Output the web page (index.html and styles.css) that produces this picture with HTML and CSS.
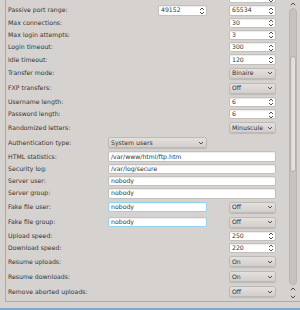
FILE: index.html
```html
<!DOCTYPE html>
<html>
<head>
<meta charset="utf-8">
<link rel="stylesheet" href="styles.css">
</head>
<body>
<div class="window">
  <div class="panel">
    <div class="viewport">
      <div class="form">
        <span class="label"></span><span class="spin c3"></span>

        <span class="label">Passive port range:</span>
        <span class="spin c2r">49152</span>
        <span class="spin c3">65534</span>

        <span class="label">Max connections:</span><span class="spin c3">30</span>
        <span class="label">Max login attempts:</span><span class="spin c3">3</span>
        <span class="label">Login timeout:</span><span class="spin c3">300</span>
        <span class="label">Idle timeout:</span><span class="spin c3">120</span>
        <span class="label">Transfer mode:</span><span class="combo c3">Binaire</span>
        <span class="label">FXP transfers:</span><span class="combo c3">Off</span>
        <span class="label">Username length:</span><span class="spin c3">6</span>
        <span class="label">Password length:</span><span class="spin c3">6</span>
        <span class="label">Randomized letters:</span><span class="combo c3">Minuscule</span>
        <span class="label">Authentication type:</span><span class="combo c2">System users</span>
        <span class="label">HTML statistics:</span><span class="text wide">/var/www/html/ftp.htm</span>
        <span class="label">Security log:</span><span class="text wide">/var/log/secure</span>
        <span class="label">Server user:</span><span class="text wide">nobody</span>
        <span class="label">Server group:</span><span class="text wide">nobody</span>
        <span class="label">Fake file user:</span><span class="text c2 focus">nobody</span><span class="combo c3">Off</span>
        <span class="label">Fake file group:</span><span class="text c2 focus">nobody</span><span class="combo c3">Off</span>
        <span class="label">Upload speed:</span><span class="spin c3">250</span>
        <span class="label">Download speed:</span><span class="spin c3">220</span>
        <span class="label">Resume uploads:</span><span class="combo c3">On</span>
        <span class="label">Resume downloads:</span><span class="combo c3">On</span>
        <span class="label">Remove aborted uploads:</span><span class="combo c3">Off</span>
      </div>
    </div>
    <div class="scrollbar">
      <div class="sb-arrow"><svg width="6" height="4" viewBox="0 0 6 4"><path d="M0.8 3.2 L3 1 L5.2 3.2" fill="none" stroke="#4a4846" stroke-width="1"/></svg></div>
      <div class="groove">
        <div class="space-top"></div>
        <div class="handle"></div>
      </div>
      <div class="sb-arrow"><svg width="6" height="4" viewBox="0 0 6 4"><path d="M0.8 3.2 L3 1 L5.2 3.2" fill="none" stroke="#4a4846" stroke-width="1"/></svg></div>
      <div class="sb-arrow"><svg width="6" height="4" viewBox="0 0 6 4"><path d="M0.8 0.8 L3 3 L5.2 0.8" fill="none" stroke="#4a4846" stroke-width="1"/></svg></div>
    </div>
  </div>
  <div class="bottom-strip"></div>
</div>
</body>
</html>
```

FILE: styles.css
```css
html, body {
  margin: 0;
  padding: 0;
  background: #d6d2cf;
}

.window {
  width: 300px;
  height: 310px;
  display: flex;
  flex-direction: column;
  background: #d6d2cf;
  font-family: "DejaVu Sans", sans-serif;
  font-size: 6.2px;
  color: #363534;
  overflow: hidden;
}

.panel {
  flex: 1;
  min-height: 0;
  display: flex;
  margin-left: 5px;
  border-left: 1px solid #aeaaa7;
  border-bottom: 1px solid #aeaaa7;
}

.viewport {
  flex: 1;
  min-width: 0;
  overflow: hidden;
}

.form {
  margin-top: -8px;
  padding-left: 2px;
  display: grid;
  grid-template-columns: 100px 99px 22px 47px;
  align-items: center;
}

.label {
  grid-column: 1;
  white-space: nowrap;
  line-height: 8px;
}

.spin, .text, .combo {
  box-sizing: border-box;
  display: flex;
  align-items: center;
  white-space: nowrap;
  overflow: hidden;
  line-height: 8px;
  padding-left: 2px;
}

.spin, .text {
  height: 10.3px;
  margin: 1px 0;
  background: #ffffff;
  border: 1px solid #c3bfbc;
  border-radius: 2px;
  box-shadow: inset 0 1px 1px rgba(0,0,0,0.08);
}

.spin {
  position: relative;
}

.spin::after {
  content: "";
  position: absolute;
  right: 2px;
  top: 1.5px;
  width: 4px;
  height: 6px;
  background:
    linear-gradient(135deg, transparent 40%, #55524f 40%, #55524f 60%, transparent 60%) 0 0 / 2px 2px no-repeat,
    linear-gradient(45deg, transparent 40%, #55524f 40%, #55524f 60%, transparent 60%) 2px 0 / 2px 2px no-repeat,
    linear-gradient(45deg, transparent 40%, #55524f 40%, #55524f 60%, transparent 60%) 0 4px / 2px 2px no-repeat,
    linear-gradient(135deg, transparent 40%, #55524f 40%, #55524f 60%, transparent 60%) 2px 4px / 2px 2px no-repeat;
}

.combo {
  height: 11px;
  margin: 2px 0;
  border: 1px solid #bdb9b6;
  border-radius: 2.5px;
  background: linear-gradient(#e3e0de, #d2cecb);
  box-shadow: 0 1px 1px rgba(0,0,0,0.12);
  position: relative;
}

.combo::after {
  content: "";
  position: absolute;
  right: 3px;
  top: 3.5px;
  width: 4px;
  height: 2px;
  background:
    linear-gradient(45deg, transparent 35%, #55524f 35%, #55524f 65%, transparent 65%) 0 0 / 2px 2px no-repeat,
    linear-gradient(135deg, transparent 35%, #55524f 35%, #55524f 65%, transparent 65%) 2px 0 / 2px 2px no-repeat;
}

.c2 { grid-column: 2; }
.c2r { grid-column: 2; justify-self: end; width: 49px; }
.c3 { grid-column: 4; }
.wide { grid-column: 2 / 5; }

.text.focus {
  border-color: #94d2ee;
  box-shadow: 0 0 1px #a9ddf3, inset 0 1px 1px rgba(0,0,0,0.06);
}

.scrollbar {
  width: 14px;
  display: flex;
  flex-direction: column;
  align-items: center;
  padding-left: 1px;
}

.sb-arrow {
  height: 8px;
  display: flex;
  align-items: center;
  justify-content: center;
  width: 9px;
}

.groove {
  flex: 1;
  width: 8px;
  box-sizing: border-box;
  background: #c6c2bf;
  border: 1px solid #b9b5b2;
  border-radius: 4px;
  display: flex;
  flex-direction: column;
  align-items: center;
}

.space-top {
  height: 47px;
}

.handle {
  width: 6px;
  height: 116px;
  box-sizing: border-box;
  background: linear-gradient(90deg, #dcd8d5, #e6e3e1);
  border: 1px solid #b3afac;
  border-radius: 3px;
}

.bottom-strip {
  height: 6px;
  background: #d6d2cf;
  border-bottom: 2px solid #7ea7cf;
}
```
